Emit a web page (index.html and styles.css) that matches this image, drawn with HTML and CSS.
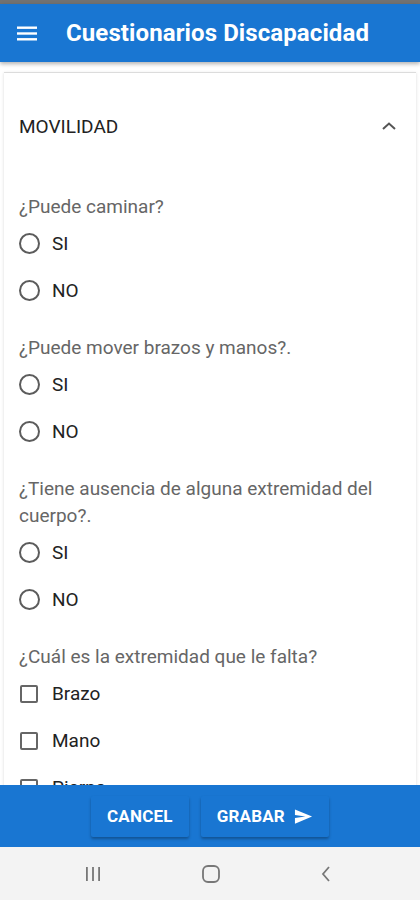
FILE: index.html
```html
<!DOCTYPE html>
<html lang="es">
<head>
    <meta charset="UTF-8">
    <meta name="viewport" content="width=device-width, initial-scale=1.0">
    <title>Cuestionarios Discapacidad</title>
    <link rel="stylesheet" href="styles.css">
</head>
<body>
    <div class="screen">
        <div class="status"></div>

        <header class="appbar">
            <button class="menu-btn" aria-label="Menu">
                <svg width="22" height="18" viewBox="0 0 22 18">
                    <rect x="1" y="2.5" width="20" height="2.4" fill="#fff"/>
                    <rect x="1" y="8.3" width="20" height="2.4" fill="#fff"/>
                    <rect x="1" y="14.1" width="20" height="2.4" fill="#fff"/>
                </svg>
            </button>
            <h1 class="title">Cuestionarios Discapacidad</h1>
        </header>

        <main class="main">
            <section class="panel">
                <div class="panel-header">
                    <span class="panel-title">MOVILIDAD</span>
                    <svg class="chevron" width="16" height="10" viewBox="0 0 16 10">
                        <polyline points="2,8 8,2.5 14,8" fill="none" stroke="#555" stroke-width="2"/>
                    </svg>
                </div>

                <div class="panel-body">
                    <!-- Pregunta 1 -->
                    <div class="question">
                        <p class="question-text">¿Puede caminar?</p>
                        <label class="option"><span class="radio"></span>SI</label>
                        <label class="option"><span class="radio"></span>NO</label>
                    </div>

                    <!-- Pregunta 2 -->
                    <div class="question">
                        <p class="question-text">¿Puede mover brazos y manos?.</p>
                        <label class="option"><span class="radio"></span>SI</label>
                        <label class="option"><span class="radio"></span>NO</label>
                    </div>

                    <!-- Pregunta 3 -->
                    <div class="question">
                        <p class="question-text">¿Tiene ausencia de alguna extremidad del cuerpo?.</p>
                        <label class="option"><span class="radio"></span>SI</label>
                        <label class="option"><span class="radio"></span>NO</label>
                    </div>

                    <!-- Pregunta 4 -->
                    <div class="question">
                        <p class="question-text">¿Cuál es la extremidad que le falta?</p>
                        <label class="option"><span class="check"></span>Brazo</label>
                        <label class="option"><span class="check"></span>Mano</label>
                        <label class="option"><span class="check"></span>Pierna</label>
                    </div>
                </div>
            </section>
        </main>

        <footer class="actions">
            <button class="action-btn">CANCEL</button>
            <button class="action-btn">GRABAR
                <svg class="send" width="19" height="17" viewBox="0 0 20 17">
                    <path d="M1 1 L19 8.5 L1 16 L1 10.2 L12 8.5 L1 6.8 Z" fill="#fff"/>
                </svg>
            </button>
        </footer>

        <nav class="navbar">
            <svg width="18" height="16" viewBox="0 0 18 16">
                <rect x="2" y="1" width="1.8" height="14" fill="#777"/>
                <rect x="8.1" y="1" width="1.8" height="14" fill="#777"/>
                <rect x="14.2" y="1" width="1.8" height="14" fill="#777"/>
            </svg>
            <svg width="20" height="20" viewBox="0 0 20 20">
                <rect x="2" y="2" width="16" height="16" rx="5" fill="none" stroke="#777" stroke-width="1.8"/>
            </svg>
            <svg width="12" height="18" viewBox="0 0 12 18">
                <polyline points="9,2 3,9 9,16" fill="none" stroke="#777" stroke-width="1.8"/>
            </svg>
        </nav>
    </div>
</body>
</html>
```

FILE: styles.css
```css
* {
    box-sizing: border-box;
}

body {
    margin: 0;
    padding: 0;
    font-family: Roboto, "Noto Sans", Arial, sans-serif;
    background-color: #fff;
}

.screen {
    width: 420px;
    height: 900px;
    display: flex;
    flex-direction: column;
    overflow: hidden;
}

.status {
    height: 4px;
    background-color: #727272;
}

.appbar {
    height: 58px;
    background-color: #1976d2;
    display: flex;
    align-items: center;
    padding-left: 15px;
    box-shadow: 0 2px 4px rgba(0, 0, 0, 0.3);
    position: relative;
    z-index: 2;
}

.menu-btn {
    background: none;
    border: none;
    padding: 0;
    width: 24px;
    height: 24px;
    display: flex;
    align-items: center;
    justify-content: center;
}

.title {
    margin: 0 0 0 27px;
    color: #fff;
    font-size: 24px;
    font-weight: 700;
    letter-spacing: 0.1px;
}

.main {
    flex: 1;
    overflow: hidden;
    padding: 10px 4px 0;
}

.panel {
    border-top: 1px solid #dcdcdc;
    box-shadow: 0 1px 3px rgba(0, 0, 0, 0.15);
    background-color: #fff;
}

.panel-header {
    height: 106px;
    display: flex;
    align-items: center;
    justify-content: space-between;
    padding: 0 19px 0 15px;
}

.panel-title {
    font-size: 19px;
    color: #222;
}

.panel-body {
    padding: 14px 15px 0;
}

.question {
    margin-bottom: 20px;
}

.question-text {
    margin: 0;
    font-size: 19px;
    line-height: 27px;
    color: #666;
}

.option {
    height: 47px;
    display: flex;
    align-items: center;
    font-size: 19px;
    color: #222;
}

.radio {
    width: 21px;
    height: 21px;
    border: 2px solid #5c5c5c;
    border-radius: 50%;
    margin: 0 12px 0 0;
}

.check {
    width: 18px;
    height: 18px;
    border: 2px solid #666;
    border-radius: 2px;
    margin: 0 14px 0 1px;
}

.actions {
    height: 62px;
    background-color: #1976d2;
    display: flex;
    align-items: center;
    justify-content: center;
    gap: 12px;
    position: relative;
    z-index: 2;
}

.action-btn {
    height: 41px;
    background-color: #1976d2;
    border: none;
    border-radius: 2px;
    color: #fff;
    font-family: Roboto, Arial, sans-serif;
    font-size: 17px;
    font-weight: 700;
    letter-spacing: 0.2px;
    padding: 0 16px;
    display: flex;
    align-items: center;
    gap: 9px;
    box-shadow: 0 2px 3px rgba(0, 0, 0, 0.3);
}

.navbar {
    height: 53px;
    background-color: #f3f3f3;
    display: flex;
    align-items: center;
    justify-content: space-between;
    padding: 0 88px 0 84px;
}
```
